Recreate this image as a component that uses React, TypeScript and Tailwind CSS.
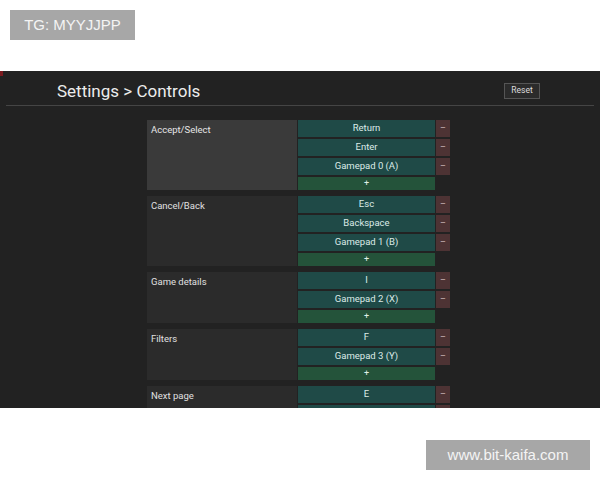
import React from "react";

type Action = { label: string; keys: string[]; active?: boolean; cut?: boolean };

const actions: Action[] = [
	{ label: "Accept/Select", keys: ["Return", "Enter", "Gamepad 0 (A)"], active: true },
	{ label: "Cancel/Back", keys: ["Esc", "Backspace", "Gamepad 1 (B)"] },
	{ label: "Game details", keys: ["I", "Gamepad 2 (X)"] },
	{ label: "Filters", keys: ["F", "Gamepad 3 (Y)"] },
	// second binding scrolls out of view below the panel edge
	{ label: "Next page", keys: ["E", ""], cut: true },
];

function ActionRow({ action }: { action: Action }) {
	return (
		<div className="flex gap-[1px]">
			<div
				className={
					action.active
						? "w-[150px] bg-[#3a3a3a] px-[4px] pt-[3px] text-[9.5px] text-[#e6e6e6]"
						: "w-[150px] bg-[#2b2b2b] px-[4px] pt-[3px] text-[9.5px] text-[#e0e0e0]"
				}
			>
				{action.label}
			</div>
			<div className="flex flex-col gap-[2px]">
				{action.keys.map((k, i) => (
					<div key={i} className="flex gap-[1px]">
						<div className="flex h-[17px] w-[137px] items-center justify-center bg-[#1f4a47] text-[9.5px] text-[#dcebe8]">
							{k}
						</div>
						<div className="flex h-[17px] w-[14px] items-center justify-center bg-[#4d3334] text-[9px] text-[#cbb]">
							{k ? "–" : ""}
						</div>
					</div>
				))}
				{!action.cut && (
					<div className="flex h-[13px] w-[137px] items-center justify-center bg-[#24533a] text-[9px] text-[#e0f0e6]">
						+
					</div>
				)}
			</div>
		</div>
	);
}

export default function App() {
	return (
		<div className="h-[480px] w-[600px] overflow-hidden bg-white font-['Roboto',sans-serif]">
			<div className="h-[71px] pl-[10px] pt-[10px]">
				<div className="inline-flex h-[30px] w-[125px] items-center justify-center bg-[#a7a7a7] font-['Liberation_Sans',sans-serif] text-[15px] text-[#f4f4f4]">
					TG: MYYJJPP
				</div>
			</div>
			<div className="relative h-[337px] overflow-hidden bg-[#222222]">
				<div className="absolute left-0 top-0 h-[5px] w-[3px] bg-[#7a1a1f]" />
				<div className="flex h-[34px] items-center pl-[57px] pr-[60px] pt-[5px]">
					<div className="flex-1 pt-[2px] text-[17px] text-[#ececec]">Settings &gt; Controls</div>
					<div className="flex h-[16px] w-[36px] items-center justify-center border border-[#555] bg-[#2b2b2b] text-[8.5px] text-[#ddd]">
						Reset
					</div>
				</div>
				<div className="mx-[6px] h-[1px] bg-[#454545]" />
				<div className="ml-[147px] mt-[14px] flex flex-col gap-[6px]">
					{actions.map((a) => (
						<ActionRow key={a.label} action={a} />
					))}
				</div>
			</div>
			<div className="flex justify-end pr-[10px] pt-[32px]">
				<div className="flex h-[30px] w-[164px] items-center justify-center bg-[#a7a7a7] font-['Liberation_Sans',sans-serif] text-[15px] text-[#f4f4f4]">
					www.bit-kaifa.com
				</div>
			</div>
		</div>
	);
}
